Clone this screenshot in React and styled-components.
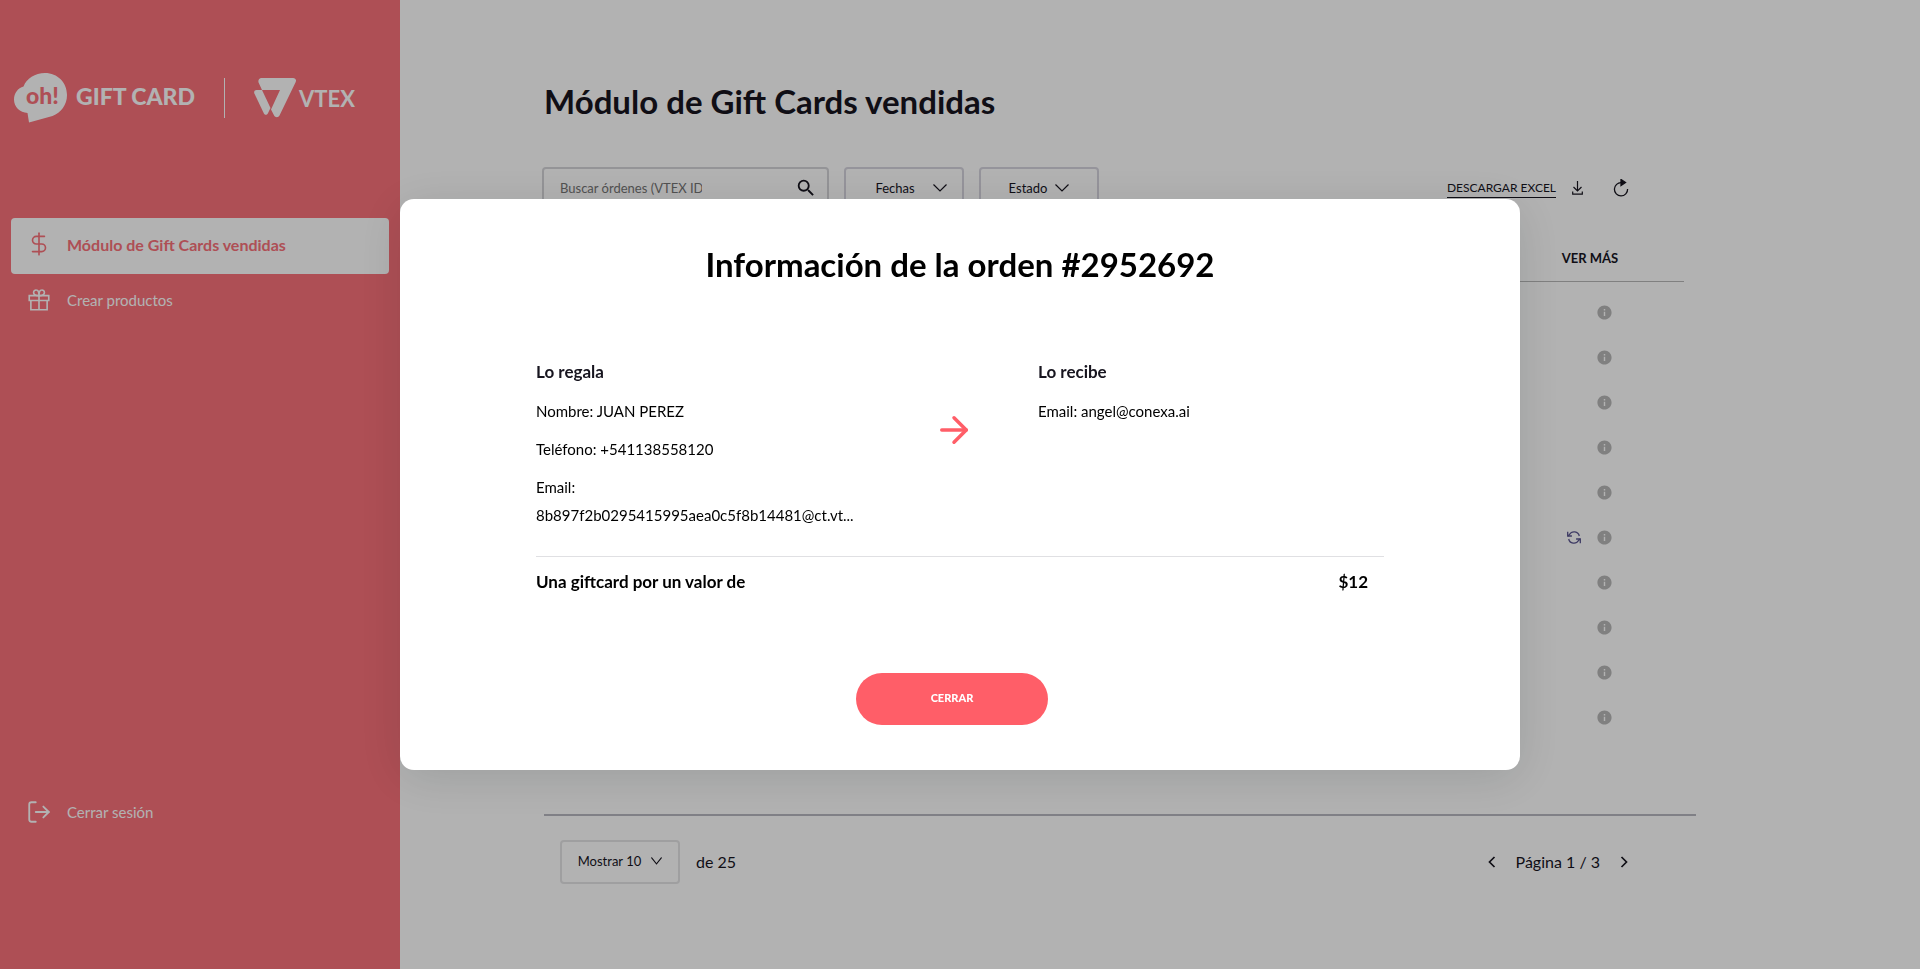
import React from "react";
import styled, { createGlobalStyle } from "styled-components";
import { ArrowRight, DollarSign, LogOut } from "lucide-react";
import { MdInfo, MdSearch } from "react-icons/md";

const rows = [1, 2, 3, 4, 5, 6, 7, 8, 9, 10];
const RETRY_ROW = 6;

export default function App() {
  return (
    <>
      <GlobalStyle />
      <Page>
        <Sidebar />
        <Main>
          <Title>Módulo de Gift Cards vendidas</Title>
          <Toolbar />
          <OrdersTable />
          <Pagination />
        </Main>
      </Page>
      <OrderModal />
    </>
  );
}

function Sidebar() {
  return (
    <Aside>
      <Logos>
        <OhLogo />
        <BrandName>GIFT CARD</BrandName>
        <LogoDivider />
        <VtexLogo />
        <VtexName>VTEX</VtexName>
      </Logos>
      <Nav>
        <NavLink href="#ventas" $active>
          <DollarSign size={26} strokeWidth={1.5} />
          Módulo de Gift Cards vendidas
        </NavLink>
        <NavLink href="#productos">
          <GiftIcon />
          Crear productos
        </NavLink>
        <NavLink href="#salir" $last>
          <LogOut size={26} strokeWidth={1.7} />
          Cerrar sesión
        </NavLink>
      </Nav>
    </Aside>
  );
}

function Toolbar() {
  return (
    <Bar>
      <SearchBox>
        <SearchInput aria-label="Buscar órdenes" placeholder="Buscar órdenes (VTEX ID)" />
        <SearchButton aria-label="Buscar">
          <MdSearch size={22} />
        </SearchButton>
      </SearchBox>
      <Filter $gap={18} $indent={14}>
        Fechas
        <Chevron width={14} />
      </Filter>
      <Filter $gap={8}>
        Estado
        <Chevron width={14} />
      </Filter>
      <Actions>
        <ExcelLink href="#excel">DESCARGAR EXCEL</ExcelLink>
        <IconButton aria-label="Descargar">
          <DownloadIcon />
        </IconButton>
        <IconButton aria-label="Actualizar" $spaced>
          <ReloadIcon />
        </IconButton>
      </Actions>
    </Bar>
  );
}

function OrdersTable() {
  return (
    <Table>
      <thead>
        <tr>
          <Th />
          <Th $narrow>VER MÁS</Th>
        </tr>
      </thead>
      <tbody>
        {rows.map((row) => (
          <tr key={row}>
            <Td />
            <Td>
              <RowActions>
                {row === RETRY_ROW && (
                  <IconButton aria-label="Reintentar">
                    <SyncIcon />
                  </IconButton>
                )}
                <InfoButton aria-label="Ver más">
                  <MdInfo size={17} />
                </InfoButton>
              </RowActions>
            </Td>
          </tr>
        ))}
      </tbody>
    </Table>
  );
}

function Pagination() {
  return (
    <Footer>
      <Filter $gap={10} $light>
        Mostrar 10
        <Chevron width={11} />
      </Filter>
      <FooterText>de 25</FooterText>
      <Pager>
        <IconButton aria-label="Anterior">
          <svg width="8" height="12" viewBox="0 0 8 12" fill="none" stroke="currentColor" strokeWidth="1.7">
            <path d="M6.5 1 1.5 6l5 5" />
          </svg>
        </IconButton>
        <FooterText>Página 1 / 3</FooterText>
        <IconButton aria-label="Siguiente">
          <svg width="8" height="12" viewBox="0 0 8 12" fill="none" stroke="currentColor" strokeWidth="1.7">
            <path d="m1.5 1 5 5-5 5" />
          </svg>
        </IconButton>
      </Pager>
    </Footer>
  );
}

function OrderModal() {
  return (
    <Overlay>
      <Modal role="dialog" aria-modal="true" aria-labelledby="order-title">
        <ModalTitle id="order-title">Información de la orden #2952692</ModalTitle>
        <People>
          <Person>
            <PersonTitle>Lo regala</PersonTitle>
            <Field>Nombre: JUAN PEREZ</Field>
            <Field>Teléfono: +541138558120</Field>
            <Field>
              Email:
              <br />
              8b897f2b0295415995aea0c5f8b14481@ct.vt...
            </Field>
          </Person>
          <ArrowCell>
            <ArrowRight size={42} strokeWidth={2} />
          </ArrowCell>
          <Person>
            <PersonTitle>Lo recibe</PersonTitle>
            <Field>Email: angel@conexa.ai</Field>
          </Person>
        </People>
        <Total>
          <span>Una giftcard por un valor de</span>
          <span>$12</span>
        </Total>
        <ModalFooter>
          <CloseButton>CERRAR</CloseButton>
        </ModalFooter>
      </Modal>
    </Overlay>
  );
}

// Icons
function OhLogo() {
  return (
    <svg width="54" height="50" viewBox="0 0 54 50">
      <path
        fill="#fff"
        d="M31 0c12.500 0 22 9.500 22 22 0 10-6 17.500-14.500 21L15 49.500 13.500 40C6 39.500 0 34 0 26.500 0 20 4 15 9.500 13.500 12.500 5.500 21 0 31 0z"
      />
      <text x="12" y="31" fill="#fa717a" fontFamily="Lato, sans-serif" fontWeight="900" fontSize="23">
        oh!
      </text>
    </svg>
  );
}

function VtexLogo() {
  return (
    <svg width="42" height="40" viewBox="0 0 42 40" fill="#fff">
      <path d="M7.500 0H39c2.500 0 3.700 2 2.600 4.200L25.500 37.500c-1.200 2.300-4.200 2.300-5.400 0L17 31.500l9-19.500H8L4.800 5C3.600 2.500 5 0 7.500 0z" />
      <path d="M2.500 12H8l8.500 18-2.700 5.500c-.9 1.700-3 1.700-3.900 0L.4 15.500C-.4 13.700.6 12 2.500 12z" />
    </svg>
  );
}

function GiftIcon() {
  return (
    <svg width="26" height="26" viewBox="0 0 24 24" fill="none" stroke="currentColor" strokeWidth="1.500">
      <path d="M3 8h18v4.500H3zM4.500 12.500V21h15v-8.500M12 8v13" />
      <path d="M12 8C8 8 7 6.500 7 5a2.300 2.300 0 0 1 2.500-2.200C11.500 2.800 12 5 12 8zM12 8c4 0 5-1.500 5-3a2.300 2.300 0 0 0-2.500-2.200C12.500 2.800 12 5 12 8z" />
    </svg>
  );
}

function Chevron({ width }) {
  return (
    <svg width={width} height="8" viewBox="0 0 14 8" preserveAspectRatio="none" fill="none" stroke="currentColor" strokeWidth="1.2">
      <path d="m.5.5 6.500 6.500L13.500.5" />
    </svg>
  );
}

function DownloadIcon() {
  return (
    <svg width="11" height="14" viewBox="0 0 11 14" fill="none" stroke="currentColor" strokeWidth="1.200">
      <path d="M5.500 0v10M1.500 6l4 4 4-4" />
      <path d="M.7 10.500v2.700h9.600v-2.700" />
    </svg>
  );
}

function ReloadIcon() {
  return (
    <svg width="16" height="18" viewBox="0 0 16 18" fill="none" stroke="currentColor" strokeWidth="1.300">
      <path d="M8.500 3.700A6.600 6.600 0 1 0 14.600 10" />
      <path d="M8 .5v6l4.500-3z" fill="currentColor" />
    </svg>
  );
}

function SyncIcon() {
  return (
    <svg width="14" height="13" viewBox="0 0 14 13" fill="none" stroke="#5a5590" strokeWidth="1.300">
      <path d="M12.300 5A5.300 5.300 0 0 0 2.500 3.500L1 5M1.700 8a5.300 5.300 0 0 0 9.800 1.500L13 8" />
      <path d="M.7.800V5h4.200M13.300 12.200V8H9.100" />
    </svg>
  );
}

// Styles
const GlobalStyle = createGlobalStyle`
  *, *::before, *::after {
    box-sizing: border-box;
  }
  body {
    margin: 0;
    background: #fff;
    color: #17151f;
    font-family: Lato, "Open Sans", sans-serif;
    font-size: 15px;
  }
  h1, h2, h3, p {
    margin: 0;
  }
  button, input {
    font: inherit;
    color: inherit;
  }
  svg {
    display: block;
    flex: none;
  }
`;
const Page = styled.div`
  display: flex;
  min-height: 100vh;
`;
const Aside = styled.aside`
  flex: 0 0 400px;
  display: flex;
  flex-direction: column;
  padding: 73px 11px 127px;
  background: #fa717a;
  color: #fff;
`;
const Logos = styled.div`
  display: flex;
  align-items: center;
  height: 50px;
  padding-left: 3px;
`;
const BrandName = styled.span`
  width: 126px;
  margin-left: 8px;
  padding-bottom: 4px;
  font-size: 23px;
  font-weight: 900;
  line-height: 30px;
  white-space: nowrap;
`;
const LogoDivider = styled.span`
  width: 1px;
  height: 40px;
  margin: 0 29px 0 22px;
  background: #fff;
`;
const VtexName = styled.span`
  margin-left: 3px;
  font-size: 22px;
  font-weight: 700;
`;
const Nav = styled.nav`
  flex: 1;
  display: flex;
  flex-direction: column;
  margin-top: 95px;
`;
const NavLink = styled.a`
  display: flex;
  align-items: center;
  gap: 15px;
  height: 56px;
  margin-top: ${(props) => (props.$last ? "auto" : "0")};
  padding: 0 15px 4px;
  border-radius: 4px;
  background: ${(props) => (props.$active ? "#fff" : "transparent")};
  color: ${(props) => (props.$active ? "#fa717a" : "#fff")};
  font-size: ${(props) => (props.$active ? 16 : 15)}px;
  font-weight: ${(props) => (props.$active ? 700 : 400)};
  text-decoration: none;
`;
const Main = styled.main`
  flex: 1;
  min-width: 0;
  padding: 79px 224px 40px 144px;
`;
const Title = styled.h1`
  font-size: 33px;
  font-weight: 700;
  line-height: 44px;
`;
const Bar = styled.div`
  display: flex;
  align-items: center;
  gap: 15px;
  margin: 44px 0 0 -2px;
  font-size: 14px;
`;
const SearchBox = styled.div`
  display: flex;
  align-items: center;
  justify-content: space-between;
  width: 287px;
  height: 44px;
  padding: 0 10px 2px 16px;
  border: 2px solid #d4d4d8;
  border-radius: 4px;
`;
const SearchInput = styled.input`
  width: 142px;
  padding: 0;
  border: 0;
  outline: 0;
  background: transparent;
  font-size: 13px;
  &::placeholder {
    color: #757575;
    opacity: 1;
  }
`;
const SearchButton = styled.button`
  padding: 0;
  border: 0;
  background: none;
`;
const Filter = styled.button`
  display: flex;
  align-items: center;
  justify-content: center;
  gap: ${(props) => props.$gap}px;
  width: 120px;
  height: 44px;
  padding: 0 0 2px ${(props) => props.$indent || 0}px;
  border: 2px solid ${(props) => (props.$light ? "#e4e4e6" : "#d6d4de")};
  border-radius: 4px;
  background: none;
  font-size: 13px;
`;
const Actions = styled.div`
  display: flex;
  align-items: center;
  margin-left: auto;
  padding: 0 67px 2px 0;
`;
const ExcelLink = styled.a`
  margin-right: 16px;
  border-bottom: 1px solid #17151f;
  color: inherit;
  font-size: 12px;
  line-height: 18px;
  text-decoration: none;
`;
const IconButton = styled.button`
  margin-left: ${(props) => (props.$spaced ? "30px" : "0")};
  padding: 0;
  border: 0;
  background: none;
`;
const Table = styled.table`
  width: calc(100% - 12px);
  margin-top: 25px;
  border-collapse: collapse;
  tbody::before {
    content: "";
    display: block;
    height: 8px;
  }
`;
const Th = styled.th`
  width: ${(props) => (props.$narrow ? "188px" : "auto")};
  height: 45px;
  padding: 0;
  border-bottom: 1px solid #b8b8b8;
  font-size: 13px;
  font-weight: 700;
`;
const Td = styled.td`
  height: 45px;
  padding: 0;
`;
const RowActions = styled.div`
  display: flex;
  align-items: center;
  justify-content: flex-end;
  gap: 15px;
  padding-right: 71px;
`;
const InfoButton = styled(IconButton)`
  color: #b8b8b8;
`;
const Footer = styled.footer`
  display: flex;
  align-items: center;
  gap: 16px;
  margin-top: 74px;
  padding: 24px 68px 0 16px;
  border-top: 2px solid #b8b8c0;
`;
const FooterText = styled.span`
  font-size: 16px;
`;
const Pager = styled.div`
  display: flex;
  align-items: center;
  gap: 20px;
  margin-left: auto;
`;
const Overlay = styled.div`
  position: fixed;
  inset: 0;
  display: flex;
  align-items: center;
  justify-content: center;
  background: rgba(0, 0, 0, 0.3);
`;
const Modal = styled.section`
  width: 1120px;
  max-width: 100%;
  padding: 43px 136px 45px;
  border-radius: 14px;
  background: #fff;
  box-shadow: 0 8px 48px rgba(0, 20, 20, 0.13);
  color: #000;
`;
const ModalTitle = styled.h2`
  font-size: 33px;
  font-weight: 700;
  line-height: 44px;
  text-align: center;
  white-space: nowrap;
`;
const People = styled.div`
  display: grid;
  grid-template-columns: 334px 168px 1fr;
  margin-top: 71px;
  padding-bottom: 27px;
  border-bottom: 1px solid #e0e0e3;
`;
const Person = styled.div`
  display: flex;
  flex-direction: column;
  gap: 10px;
`;
const PersonTitle = styled.h3`
  color: #17151f;
  font-size: 17px;
  font-weight: 700;
  line-height: 30px;
`;
const Field = styled.p`
  font-size: 15px;
  line-height: 28px;
`;
const ArrowCell = styled.div`
  display: flex;
  justify-content: center;
  padding-top: 52px;
  color: #ff5e68;
`;
const Total = styled.div`
  display: flex;
  justify-content: space-between;
  padding: 10px 16px 0 0;
  font-size: 17px;
  font-weight: 700;
  line-height: 30px;
`;
const ModalFooter = styled.div`
  display: flex;
  justify-content: center;
  margin-top: 76px;
  padding-right: 16px;
`;
const CloseButton = styled.button`
  width: 192px;
  height: 52px;
  padding: 0 0 4px;
  border: 0;
  border-radius: 26px;
  background: #ff5e68;
  color: #fff;
  font-size: 11px;
  font-weight: 900;
`;
